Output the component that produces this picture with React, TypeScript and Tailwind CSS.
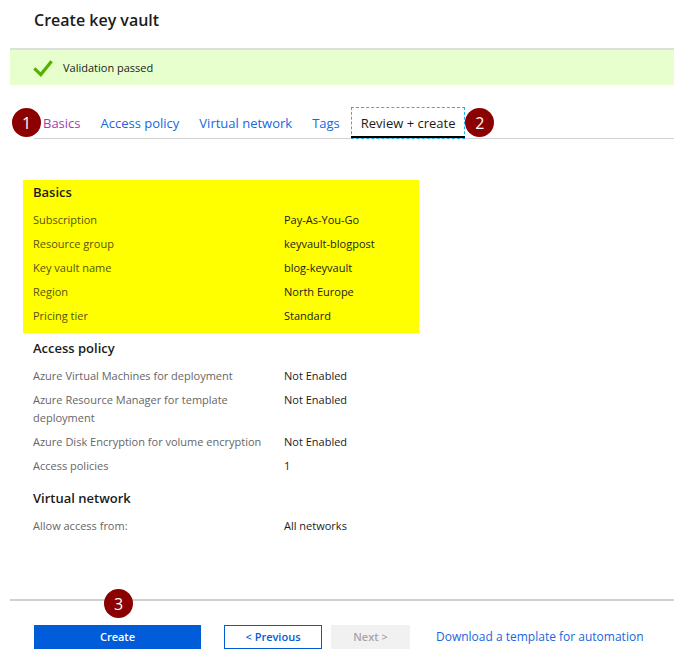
import type { ReactNode } from "react";

type Row = { label: string; value: string };

const basics: Row[] = [
  { label: "Subscription", value: "Pay-As-You-Go" },
  { label: "Resource group", value: "keyvault-blogpost" },
  { label: "Key vault name", value: "blog-keyvault" },
  { label: "Region", value: "North Europe" },
  { label: "Pricing tier", value: "Standard" },
];

const accessPolicy: Row[] = [
  { label: "Azure Virtual Machines for deployment", value: "Not Enabled" },
  { label: "Azure Resource Manager for template deployment", value: "Not Enabled" },
  { label: "Azure Disk Encryption for volume encryption", value: "Not Enabled" },
  { label: "Access policies", value: "1" },
];

const virtualNetwork: Row[] = [{ label: "Allow access from:", value: "All networks" }];

const tabs = [
  { label: "Basics", href: "#basics", visited: true },
  { label: "Access policy", href: "#access-policy", visited: false },
  { label: "Virtual network", href: "#virtual-network", visited: false },
  { label: "Tags", href: "#tags", visited: false },
];

function Marker({ children, className }: { children: ReactNode; className: string }) {
  return (
    <span
      className={`absolute flex size-[29px] items-center justify-center rounded-full bg-[#8b0000] text-base leading-none text-white ${className}`}
    >
      {children}
    </span>
  );
}

function Section({ title, rows, highlighted = false }: { title: string; rows: Row[]; highlighted?: boolean }) {
  return (
    <section className={`max-w-[396px] pt-0.5 pb-[5px] pl-2.5 ${highlighted ? "bg-[#ffff00]" : ""}`}>
      <h2 className="pb-1.5 text-[13px] leading-5 font-semibold text-[#1b1b1b]">{title}</h2>
      <dl className="text-[11px] leading-[18px]">
        {rows.map((row) => (
          <div key={row.label} className="flex py-[3px]">
            <dt className={`w-[251px] shrink-0 pr-3 ${highlighted ? "text-[#55550a]" : "text-[#666666]"}`}>
              {row.label}
            </dt>
            <dd className="text-[#1b1b1b]">{row.value}</dd>
          </div>
        ))}
      </dl>
    </section>
  );
}

export default function App() {
  return (
    <div className="flex min-h-screen flex-col bg-white pl-2.5 font-['Open_Sans','Noto_Sans',sans-serif] text-[#1b1b1b]">
      <header className="border-b-2 border-[#dedede] pt-2 pb-4 pl-6">
        <h1 className="text-base leading-6 font-semibold">Create key vault</h1>
      </header>

      <div role="status" className="flex h-[35px] items-center gap-2.5 bg-[#e6ffcc] pt-0.5 pl-[23px] text-[11px]">
        <svg viewBox="0 0 20 18" className="h-[18px] w-5" aria-hidden="true">
          <path d="M1.3 8.4 L7.8 14.6 L18.6 1.2" fill="none" stroke="#57b000" strokeWidth="3.2" />
        </svg>
        Validation passed
      </div>

      <nav className="relative mt-[22px] ml-6 flex h-8 gap-0.5 border-b border-[#d2d2d2] text-[13px]">
        <Marker className="top-px -left-[22px]">1</Marker>
        {tabs.map((tab) => (
          <a
            key={tab.label}
            href={tab.href}
            className={`-mb-px flex items-center px-[9px] pt-0.5 ${tab.visited ? "text-[#a33cb4]" : "text-[#1a66e0]"}`}
          >
            {tab.label}
          </a>
        ))}
        <a
          href="#review"
          aria-current="page"
          className="relative -mb-px flex items-center border border-b-0 border-dashed border-[#1fb6ee] px-[9px] pt-px"
        >
          Review + create
          <span className="absolute -inset-x-px bottom-0 border-t-2 border-black">
            <span className="block border-t border-dashed border-[#1fb6ee]" />
          </span>
          <Marker className="top-0 left-full ml-px">2</Marker>
        </a>
      </nav>

      <main className="mt-[41px] flex flex-col gap-[3px] pb-8 pl-[13px]">
        <Section title="Basics" rows={basics} highlighted />
        <Section title="Access policy" rows={accessPolicy} />
        <Section title="Virtual network" rows={virtualNetwork} />
      </main>

      <footer className="relative mt-auto flex items-center border-t-2 border-[#d0d0d0] pt-6 pb-2.5 pl-6 text-[11px]">
        <Marker className="-top-3 left-[94px]">3</Marker>
        <button type="button" className="h-6 w-[167px] bg-[#015cda] font-semibold text-white">Create</button>
        <button type="button" className="ml-[23px] h-6 w-[98px] border border-[#015cda] bg-white font-semibold text-[#015cda]">
          &lt; Previous
        </button>
        <button type="button" disabled className="ml-[9px] h-6 w-[79px] bg-[#f1f1f1] font-semibold text-[#a6a6a6]">
          Next &gt;
        </button>
        <a href="#template" className="ml-[26px] text-xs text-[#1a66e0]">Download a template for automation</a>
      </footer>
    </div>
  );
}
